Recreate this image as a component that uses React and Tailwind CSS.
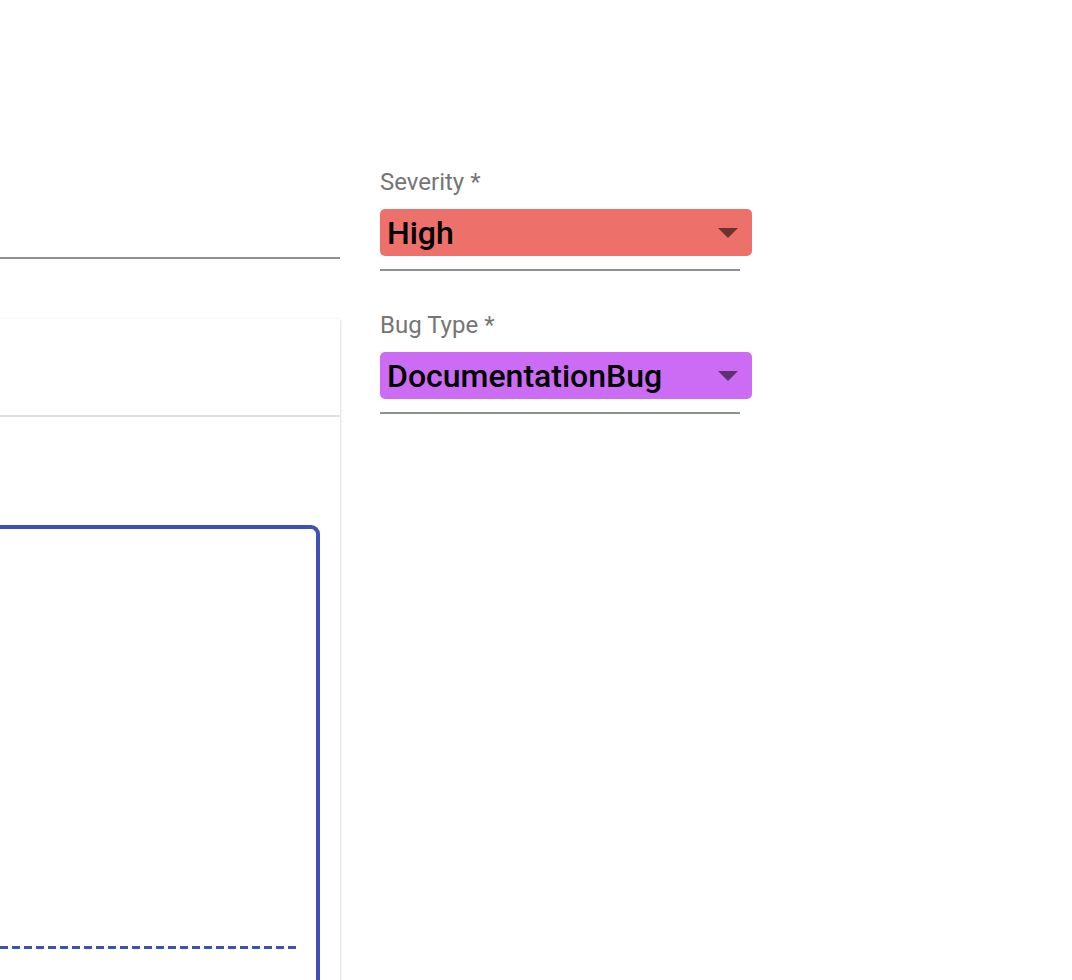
import React from 'react';

function ArrowDrop() {
    return (
        <svg width="20" height="10" viewBox="0 0 20 10" className="shrink-0">
            <polygon points="0,0 20,0 10,10" fill="rgba(0,0,0,0.54)" />
        </svg>
    );
}

function ColorSelect({ label, value, bg }) {
    return (
        <div className="flex flex-col">
            <label className="text-[24px] leading-[20px] text-[#757575] h-[37px]">{label} *</label>
            <div className={`flex items-center justify-between h-[47px] w-[372px] rounded-[5px] pl-[7px] pr-[14px] ${bg}`}>
                <span className="text-[32px] font-medium text-black leading-none">{value}</span>
                <ArrowDrop />
            </div>
            <div className="mt-[13px] h-[2px] w-[360px] bg-[#8f8f8f]" />
        </div>
    );
}

export default function App() {
    return (
        <div className="flex h-[980px] w-[1072px] overflow-hidden bg-white font-['Roboto',sans-serif]">
            <div className="w-[340px] shrink-0 pt-[257px]">
                <div className="h-[2px] bg-[#8f8f8f]" />
                <div className="mt-[60px] h-[800px] bg-white shadow-[0_1px_3px_rgba(0,0,0,0.2),0_1px_1px_rgba(0,0,0,0.12)]">
                    <div className="h-[98px] border-b-2 border-[#e0e0e0]" />
                    <div className="pt-[108px] pr-[20px]">
                        <div className="h-[600px] rounded-tr-[9px] border-[4px] border-l-0 border-b-0 border-[#3f51b5] pt-[417px] pr-[19px]">
                            <div className="h-[3px] bg-[repeating-linear-gradient(90deg,#3f51b5_0_8px,transparent_8px_12px)]" />
                        </div>
                    </div>
                </div>
            </div>
            <div className="ml-[40px] flex flex-col gap-[44px] pt-[172px]">
                <ColorSelect label="Severity" value="High" bg="bg-[#ee706a]" />
                <ColorSelect label="Bug Type" value="DocumentationBug" bg="bg-[#cc6cf5]" />
            </div>
        </div>
    );
}
